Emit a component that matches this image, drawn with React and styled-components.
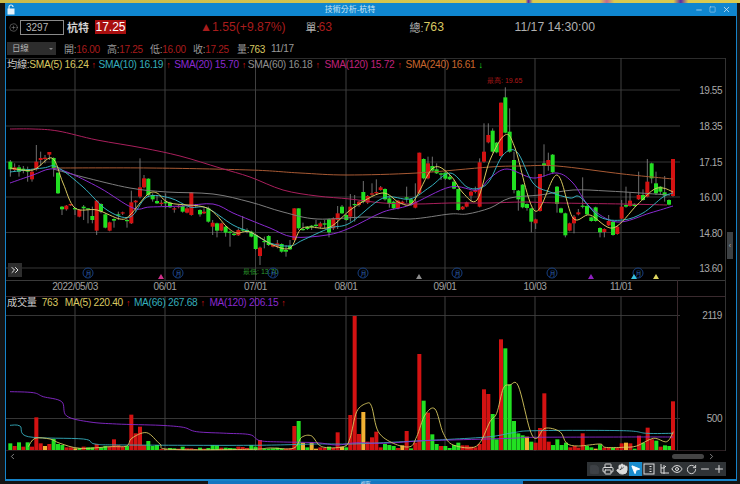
import React from "react";
import styled, { createGlobalStyle } from "styled-components";
import { CirclePlus, Printer, Hand, MousePointer2, Eye, RotateCw, Minus, Plus, Save, ChevronsRight, ChevronLeft, ChevronRight, X, Square } from "lucide-react";

const Global = createGlobalStyle`
  html, body { margin: 0; padding: 0; background: #141414; }
  body { font-family: "Liberation Sans", "Noto Sans CJK TC", sans-serif; }
`;

const C = {
  red: "#d41212", green: "#22e022", orange: "#f2b233", yellow: "#d8c860", cyan: "#35aebd",
  purple: "#8a2ad0", gray: "#8f8f8f", pink: "#c0227a", amber: "#c8662c", dim: "#b0b0b0", darkred: "#a81c1c",
};

const Page = styled.div`
  width: 740px; height: 484px; overflow: hidden; display: flex; flex-direction: column; background: #141414;
`;
const DesktopStrip = styled.div`
  height: 3px; flex: none; background: linear-gradient(90deg, #c9b94a 0, #d9c94e 71%, #5a2aa8 71.4%, #d9c94e 72%, #d9c94e 81%, #c06a90 82%, #d9c94e 83%, #d9c94e 91%, #5a2aa8 92%, #d9c94e 93%);
`;
const Win = styled.div`
  flex: none; height: 476px; margin: 0 3px 0 5px; background: #000; border: solid #1683c8; border-width: 0 1px 2px 1px;
  display: flex; flex-direction: column; overflow: hidden;
`;
const TitleBar = styled.div`
  height: 13px; flex: none; background: #0f86cf; display: flex; align-items: center; padding: 0 2px 0 1px; position: relative;
`;
const TitleText = styled.div`
  flex: 1; text-align: center; color: #cfe6f5; font-size: 8px; line-height: 13px; padding-right: 10px;
`;
const WinBtns = styled.div`display: flex; gap: 6px; align-items: center; color: #dcecf7; padding-right: 3px;`;
const HeadRow = styled.div`
  height: 22px; flex: none; display: flex; align-items: center; padding-left: 3px; color: ${C.dim}; font-size: 12px; white-space: nowrap;
`;
const CodeBox = styled.div`
  width: 44px; height: 15px; margin-left: 2px; border: 1px solid #8a8a8a; color: #b8b8b8; font-size: 10px; line-height: 13px; padding-left: 5px; box-sizing: border-box;
`;
const StockName = styled.span`margin-left: 3px; color: #d0d0d0; font-size: 11px; font-weight: bold; width: 28px; flex: none;`;
const PriceBox = styled.span`
  background: #a80f0f; color: #fff; font-size: 12px; height: 14px; line-height: 14px; width: 31px; flex: none; text-align: center;
`;
const Big = styled.span`
  color: ${p => p.$c || C.dim}; font-size: ${p => p.$s || 12.2}px; margin-left: ${p => p.$ml || 0}px; width: ${p => p.$w ? p.$w + "px" : "auto"}; flex: none;
`;
const SubRow = styled.div`
  height: 20px; flex: none; display: flex; align-items: center; padding-left: 1px; font-size: 10px; letter-spacing: -0.3px; color: #9a9a9a; white-space: nowrap; padding-top: 1px; box-sizing: border-box;
`;
const PeriodSelect = styled.div`
  width: 49px; height: 13px; background: #2d2d2d; color: #b5b5b5; font-size: 8.5px; line-height: 13px; padding-left: 5px; box-sizing: border-box; margin-right: 8px; position: relative;
  &::after { content: ""; position: absolute; right: 3px; top: 6px; border: 2px solid transparent; border-top-color: #888; }
`;
const Quote = styled.span`width: ${p => p.$w}px; flex: none;`;
const QV = styled.span`color: ${p => p.$c};`;
const Pane = styled.div`position: relative; flex: none; height: ${p => p.$h}px; display: block;`;
const PaneSvg = styled.svg`display: block; width: 731px; height: ${p => p.$h}px; font-family: "Liberation Sans", sans-serif;`;
const Legend = styled.div`
  position: absolute; left: 1px; top: 0; display: flex; align-items: center; font-size: 10.2px; letter-spacing: -0.3px; line-height: 14px; white-space: nowrap; color: #c8c8c8;
`;
const LegendItem = styled.span`color: ${p => p.$c}; margin-left: ${p => p.$ml || 0}px;`;
const Arrow = styled.span`color: ${p => p.$c}; margin-left: 3px; font-size: 9px; font-weight: bold; display: inline-block; width: 4px; text-align: center;`;
const ExpandBtn = styled.div`
  position: absolute; left: 2px; top: 205px; width: 14px; height: 14px; background: #2e2e2e; color: #e8e8e8; display: flex; align-items: center; justify-content: center;
`;
const Bottom = styled.div`flex: 1; display: flex; flex-direction: column;`;
const ScrollRow = styled.div`height: 11px; flex: none; display: flex; align-items: center; color: #aaa; padding: 0 20px 0 2px;`;
const Thumb = styled.div`width: 32px; height: 5px; background: #444; border-radius: 3px; margin-left: auto; margin-right: 3px;`;
const ToolRow = styled.div`display: flex; justify-content: flex-end; padding-right: 10px;`;
const Tool = styled.div`
  width: ${p => p.$w || 14}px; height: 14px; flex: none; display: flex; align-items: center; justify-content: center; background: ${p => p.$on ? "#1a8ccc" : "#2f3336"}; color: ${p => p.$dim ? "#3e4246" : "#dcdcdc"};
`;
const SideHandle = styled.div`
  position: absolute; right: 3px; top: 174px; width: 6px; height: 27px; background: #3d4144; color: #aaa; font-size: 7px; line-height: 27px; text-align: center;
`;
const Taskbar = styled.div`flex: 1; display: flex; padding-left: 208px;`;
const TaskButton = styled.div`
  width: 315px; height: 5px; overflow: hidden; background: #1576c0; color: #dcecf7; font-size: 5px; line-height: 5px; text-align: center;
`;

const G = "g", R = "r", O = "o";
const colorOf = { g: "#22e022", r: "#d41212", o: "#f2b233" };
const cand = [
 [0,[[G,31,245,268,240,290],[R,44,262,270,250,275],[G,57,262,275,255,290],[G,70,266,272,258,280],[G,83,268,275,260,305],[R,96,275,298,270,305],[R,109,245,268,195,272],[R,122,234,240,215,258],[R,135,233,237,225,250],[R,148,216,224,216,240],[G,161,234,265,232,290],[G,174,278,340,278,342],[G,186,380,388,378,405],[R,199,377,388,375,392],[R,212,372,376,372,378],[G,225,384,388,384,405],[R,238,390,410,388,412],[G,251,380,385,375,420],[G,264,385,388,385,430],[G,277,408,420,380,430],[R,290,362,452,360,465],[G,303,372,395,370,400],[G,316,403,443,400,445],[R,329,427,452,425,454],[G,342,417,422,415,443],[G,355,403,405,395,420],[R,368,397,400,395,405],[G,381,420,423,415,443],[R,394,367,430,332,432],[R,407,362,367,360,395],[R,420,322,350,235,355],[R,432,295,322,285,325],[G,445,296,345,295,348],[G,458,345,358,340,365],[G,471,363,370,345,372],[R,484,368,372,360,378],[G,497,365,370,340,385],[G,510,368,382,365,384],[R,523,385,388,380,398],[R,536,378,381,375,385],[G,548,378,395,375,398],[R,561,385,398,380,400],[R,574,337,405,337,407],[R,587,375,378,372,382],[G,600,390,403,388,410],[R,612,395,400,385,402],[G,625,385,425,380,428],[R,638,428,440,420,465],[G,651,430,452,428,472],[R,664,430,452,428,454],[G,677,440,458,436,470],[G,690,455,458,452,500],[G,702,461,465,458,468],[R,715,450,466,445,468],[G,728,448,452,408,455],[G,741,450,456,445,460]]],
 [250,[[G,4,455,470,452,472],[G,17,465,507,462,510],[R,30,503,528,500,555],[G,43,483,486,470,505],[G,56,468,495,465,498],[R,69,495,500,492,502],[R,82,490,500,480,505],[G,95,492,515,490,518],[G,108,510,515,495,530],[G,120,497,508,480,510],[R,133,385,480,385,482],[G,146,385,445,385,450],[G,159,447,450,428,452],[G,172,440,447,438,450],[G,185,437,442,435,450],[G,198,434,438,420,445],[R,211,430,440,425,445],[G,224,430,434,420,445],[G,237,418,457,415,472],[R,250,415,445,412,450],[R,263,400,420,378,447],[G,276,380,400,375,402],[G,289,405,420,403,422],[R,301,380,410,342,425],[G,314,372,375,345,425],[R,327,365,375,362,380],[G,340,336,366,303,370],[R,353,348,368,345,372],[R,366,340,344,310,348],[R,379,336,340,298,342],[R,392,322,330,318,332],[G,405,327,358,325,362],[G,418,355,372,350,383],[G,431,365,385,362,388],[R,444,362,385,360,388],[R,457,365,370,362,372],[G,470,352,356,320,368],[G,483,358,375,356,378],[R,496,365,383,310,385],[R,508,218,340,218,342],[G,521,237,295,235,298],[R,534,250,295,230,298],[G,547,258,272,230,275],[G,560,268,280,250,282],[G,573,280,284,278,300],[G,586,278,296,275,300],[G,599,290,298,285,300],[G,612,305,326,300,328],[G,625,327,390,325,392],[R,638,380,388,378,390],[R,650,367,380,365,382],[R,663,335,347,332,365],[R,676,330,336,320,340],[R,689,247,380,235,382],[R,702,215,245,130,248],[R,715,165,187,130,190]]],
 [490,[[G,8,152,215,145,218],[G,20,188,217,186,220],[R,33,68,228,68,230],[G,46,52,158,22,160],[G,59,155,215,85,218],[G,72,240,330,215,340],[G,85,332,358,330,392],[G,98,314,382,312,385],[G,111,372,384,370,392],[G,124,385,425,383,457],[R,137,418,430,416,447],[R,150,282,393,282,395],[G,162,250,258,193,290],[R,175,240,258,218,272],[G,188,224,277,222,280],[G,201,320,372,318,398],[G,213,385,398,383,400],[G,226,400,466,398,472],[R,239,430,452,428,454],[R,252,410,430,405,460],[R,265,397,403,387,406],[G,278,377,380,292,385],[G,291,378,403,376,405],[G,304,412,423,410,425],[G,317,382,423,380,425],[G,330,444,457,442,472],[R,343,447,456,445,472],[R,356,423,436,405,438],[G,369,425,465,423,467],[R,382,440,462,438,464],[R,395,380,416,360,418],[G,408,375,380,320,383],[R,420,362,378,338,380],[G,433,373,378,370,380],[R,446,345,358,275,360],[G,459,345,360,328,362],[R,472,305,350,237,352],[G,485,250,295,248,310],[G,498,310,340,275,345],[G,511,320,335,318,345],[G,524,337,347,288,365],[G,537,360,374,358,376],[R,549,237,348,237,350]]],
];
const vol = [
 [0,[[G,31,460],[R,44,468],[G,57,457],[R,70,470],[G,83,457],[R,96,470],[R,109,382],[R,122,460],[O,135,468],[R,148,462],[G,161,447],[G,174,462],[G,187,465],[R,200,472],[R,213,472],[O,226,475],[G,239,474],[R,251,470],[G,264,472],[G,277,472],[R,290,462],[G,303,472],[G,316,468],[R,329,470],[R,342,448],[R,355,465],[R,368,470],[G,381,468],[R,394,374],[R,407,430],[R,420,410],[R,432,465],[G,445,453],[G,458,468],[G,471,465],[R,484,477],[O,497,478],[G,510,474],[G,523,475],[R,536,476],[G,548,470],[R,561,475],[R,574,475],[R,587,477],[G,600,473],[R,612,476],[G,625,474],[G,638,465],[G,651,466],[R,664,473],[G,677,473],[G,690,474],[G,702,475],[R,715,470],[R,728,471],[R,741,474]]],
 [250,[[G,4,465],[G,17,470],[R,30,450],[G,43,476],[G,56,476],[G,69,475],[G,82,473],[G,95,475],[R,108,476],[R,121,475],[R,133,408],[G,146,393],[O,159,458],[G,172,472],[O,185,458],[O,198,476],[R,211,472],[R,224,474],[G,237,470],[R,250,474],[R,263,427],[O,276,470],[G,289,472],[R,301,375],[R,314,78],[R,327,432],[O,340,366],[R,353,455],[R,366,442],[R,379,425],[R,392,472],[G,405,462],[G,418,465],[G,431,468],[R,444,474],[O,457,466],[R,470,423],[G,483,475],[R,496,458],[R,508,192],[G,521,332],[R,534,368],[G,547,433],[G,560,462],[R,573,468],[G,586,468],[G,599,474],[G,612,465],[G,625,458],[R,638,466],[R,651,466],[R,663,470],[R,676,472],[R,689,462],[R,702,298],[R,715,312]]],
 [490,[[G,8,372],[G,20,448],[R,33,148],[G,46,175],[G,59,283],[G,72,393],[G,85,430],[G,98,436],[O,111,440],[G,124,455],[R,137,458],[R,150,414],[R,163,310],[R,176,455],[G,189,465],[G,202,448],[G,215,465],[G,228,458],[R,241,472],[R,254,468],[R,265,473],[R,278,430],[G,291,468],[G,304,472],[O,317,476],[G,330,463],[R,343,473],[R,356,473],[G,369,473],[R,382,473],[R,395,460],[O,408,458],[R,421,460],[G,434,476],[R,447,437],[G,460,458],[R,473,413],[R,486,448],[G,499,452],[R,512,470],[G,525,466],[G,538,468],[R,549,334]]],
];
const lines = [
 { c: "#a85a34", p: [[53,168],[150,168],[250,170],[300,173],[347,175],[417,173],[490,167],[523,166],[557,166],[623,174],[673,179]] },
 { c: "#a91f5c", p: [[10,129],[33,129],[58,131],[97,140],[143,148],[180,156],[220,168],[250,177],[283,190],[317,196],[350,199],[383,203],[417,204],[450,203],[490,203],[523,202],[557,203],[623,204],[667,205]] },
 { c: "#7d7d7d", p: [[53,169],[83,177],[130,188],[167,192],[213,194],[250,202],[283,212],[317,219],[367,217],[410,219],[450,214],[467,214],[490,208],[510,198],[540,195],[573,190],[607,191],[640,193],[670,195]] },
 { c: "#8a2ad0", p: [[10,183],[33,175],[50,169],[67,172],[100,188],[133,208],[150,207],[183,206],[213,204],[233,213],[250,220],[270,228],[293,237],[327,235],[350,228],[383,212],[410,205],[450,187],[477,190],[490,178],[507,169],[533,178],[557,173],[573,183],[590,207],[617,222],[650,213],[673,206]] },
 { c: "#35aebd", p: [[10,172],[43,168],[57,167],[83,187],[107,210],[130,217],[147,197],[170,198],[190,207],[207,208],[233,225],[250,232],[270,243],[290,246],[303,240],[330,228],[350,223],[383,198],[410,199],[430,187],[450,173],[467,187],[480,188],[490,180],[503,155],[517,152],[533,183],[550,192],[570,198],[580,197],[600,217],[623,220],[643,213],[663,197],[673,193]] },
 { c: "#d8c860", p: [[10,168],[33,170],[52,158],[63,183],[75,208],[97,210],[120,219],[130,215],[147,195],[157,193],[170,203],[207,208],[227,227],[237,233],[250,232],[273,245],[290,248],[300,230],[310,227],[330,227],[353,208],[382,193],[400,203],[413,202],[433,168],[450,175],[463,193],[477,200],[490,160],[505,135],[515,148],[535,211],[557,175],[573,218],[590,215],[613,228],[637,205],[653,190],[663,188],[673,192]] },
];
const vp = (x0, pts) => pts.map(([x, y]) => [x0 + x / 3, 290 + y / 3]);
const volLines = [
 { c: "#35aebd", p: [...vp(0,[[30,406],[60,408],[85,440],[250,447],[285,462],[380,465],[750,466]]), ...vp(250,[[200,462],[300,462],[400,458],[520,452],[600,448]]), ...vp(490,[[0,440],[70,428],[135,422],[400,422],[470,430],[550,430]])] },
 { c: "#8a2ad0", p: [...vp(0,[[30,305],[100,308],[130,320],[185,335],[200,378],[270,396],[350,402],[480,406],[550,412],[590,425],[680,430],[750,434]]), ...vp(250,[[30,452],[100,456],[200,458],[260,465],[320,458],[400,460],[520,452],[600,450]]), ...vp(490,[[60,445],[130,442],[400,441],[550,441]])] },
 { c: "#d8c860", p: [...vp(0,[[85,470],[105,445],[150,447],[180,460],[240,475],[330,470],[380,468],[395,445],[440,428],[480,462],[510,478],[750,478]]), ...vp(250,[[60,474],[130,475],[155,442],[185,438],[215,470],[280,470],[300,445],[320,365],[350,340],[365,350],[385,425],[430,460],[480,470],[500,440],[525,375],[555,357],[580,430],[610,465],[680,468],[720,395]]), ...vp(490,[[20,370],[40,295],[60,285],[85,288],[120,420],[140,445],[165,415],[210,425],[230,460],[265,468],[330,462],[345,472],[400,472],[440,468],[490,445],[530,455],[550,425]])] },
];
const smooth = (p) => {
  let d = `M${p[0][0]} ${p[0][1]}`;
  for (let i = 0; i < p.length - 1; i++) {
    const a = p[i - 1] || p[i], b = p[i], c = p[i + 1], e = p[i + 2] || c;
    d += `C${(b[0] + (c[0] - a[0]) / 6).toFixed(1)} ${(b[1] + (c[1] - a[1]) / 6).toFixed(1)} ${(c[0] - (e[0] - b[0]) / 6).toFixed(1)} ${(c[1] - (e[1] - b[1]) / 6).toFixed(1)} ${c[0].toFixed(1)} ${c[1].toFixed(1)}`;
  }
  return d;
};
const V = [75, 165, 255.5, 346, 445, 535, 621];
const DATES = [[75, "2022/05/03"], [165, "06/01"], [255.5, "07/01"], [346, "08/01"], [445, "09/01"], [535, "10/03"], [621, "11/01"]];
const H = [[90, "19.55"], [126, "18.35"], [162, "17.15"], [197, "16.00"], [232.5, "14.80"], [268, "13.60"]];
const MOONS = [88, 178, 273, 363, 457, 552, 638];
const TRI = [[161, "#d0308a"], [419, "#8c8c8c"], [591, "#9020c0"], [634, "#35c0e0"], [656, "#e0d860"]];

const AxisText = styled.text`font-size: 10px; letter-spacing: -0.45px; fill: ${p => p.$c};`;

const PriceChart = () => (
  <PaneSvg $h={238} viewBox="6 58 731 238">
    {H.map(([y]) => <line key={y} x1="6" x2="680" y1={y} y2={y} stroke="#363636" strokeWidth="1" />)}
    <line x1="6" x2="725" y1="58.5" y2="58.5" stroke="#2c2c2c" />
    <line x1="6" x2="725" y1="280.5" y2="280.5" stroke="#3a3a3a" />
    <line x1="725.5" x2="725.5" y1="58" y2="296" stroke="#333" />
    <line x1="677.5" x2="677.5" y1="280" y2="296" stroke="#3a2a2e" />
    {V.map(x => <line key={x} x1={x} x2={x} y1="58" y2="281" stroke="#404040" />)}
    {cand.map(([x0, list]) => list.map(([k, zx, t, b, wt, wb]) => {
      const x = x0 + zx / 3;
      return (
        <g key={x0 + "-" + zx}>
          <line x1={x} x2={x} y1={80 + wt / 3} y2={80 + wb / 3} stroke="#8c8c8c" strokeWidth="0.8" />
          <rect x={x - 2} y={80 + t / 3} width="4" height={Math.max(1.2, (b - t) / 3)} fill={colorOf[k]} />
        </g>
      );
    }))}
    {lines.map(l => <path key={l.c} d={smooth(l.p)} fill="none" stroke={l.c} strokeWidth="1" />)}
    <text x="487" y="83" fontSize="7" fill="#b01818">最高: 19.65</text>
    <text x="243" y="274" fontSize="7" fill="#2c9c2c">最低: 13.70</text>
    {MOONS.map(x => (
      <g key={x}>
        <circle cx={x} cy="273" r="5" fill="none" stroke="#173f80" />
        <text x={x} y="276" fontSize="7" textAnchor="middle" fill="#2f66b8">月</text>
      </g>
    ))}
    {TRI.map(([x, c]) => <polygon key={x} points={`${x - 3},279 ${x + 3},279 ${x},274`} fill={c} />)}
    {H.map(([y, t]) => <AxisText key={t} $c="#a8a8a8" x="722" y={y + 4} textAnchor="end">{t}</AxisText>)}
    {DATES.map(([x, t]) => <AxisText key={t} $c="#a0a0a0" x={x} y="290" textAnchor="middle">{t}</AxisText>)}
  </PaneSvg>
);
const VolumeChart = () => (
  <PaneSvg $h={155} viewBox="6 296 731 155">
    <line x1="6" x2="725" y1="296.5" y2="296.5" stroke="#3a2a2e" />
    <line x1="6" x2="680" y1="315.5" y2="315.5" stroke="#363636" />
    <line x1="6" x2="680" y1="418.5" y2="418.5" stroke="#363636" />
    <line x1="6" x2="725" y1="451" y2="451" stroke="#3a2a2e" strokeWidth="1.5" />
    <line x1="677.5" x2="677.5" y1="296" y2="451" stroke="#3a2a2e" />
    <line x1="725.5" x2="725.5" y1="296" y2="451" stroke="#333" />
    {V.map(x => <line key={x} x1={x} x2={x} y1="296" y2="451" stroke="#404040" />)}
    {vol.map(([x0, list]) => list.map(([k, zx, t]) => {
      const y = 290 + t / 3;
      return <rect key={x0 + "-" + zx} x={x0 + zx / 3 - 2} y={y} width="4" height={450 - y} fill={colorOf[k]} />;
    }))}
    {volLines.map(l => <path key={l.c} d={smooth(l.p)} fill="none" stroke={l.c} strokeWidth="0.9" />)}
    <AxisText $c="#a8a8a8" x="722" y="319" textAnchor="end">2119</AxisText>
    <AxisText $c="#a8a8a8" x="722" y="422" textAnchor="end">500</AxisText>
  </PaneSvg>
);

const LockIcon = () => (
  <svg width="8" height="11" viewBox="0 0 8 11"><path d="M2 5V3a2 2 0 0 1 4 0" fill="none" stroke="#e4f1fa" strokeWidth="1.2" /><rect x="0.5" y="4.5" width="7" height="6" fill="#e4f1fa" /></svg>
);
const PanelIcon = () => (
  <svg width="12" height="12" viewBox="0 0 12 12" fill="none" stroke="#dcdcdc"><rect x="1" y="1" width="10" height="10" /><path d="M6.5 3.5h2M6.5 6h2M6.5 8.5h2" /></svg>
);
const PenIcon = () => (
  <svg width="13" height="13" viewBox="0 0 13 13" fill="none" stroke="#dcdcdc"><path d="M4 1v9H12M4 5h3M7 2v6M9 3L7 5M7 8v3" /></svg>
);

export default function App() {
  return (
    <Page>
      <Global />
      <DesktopStrip />
      <Win>
        <TitleBar>
          <LockIcon />
          <TitleText>技術分析-杭特</TitleText>
          <WinBtns>
            <Minus size={8} strokeWidth={2} />
            <Square size={7} strokeWidth={1.5} />
            <X size={9} strokeWidth={2} />
          </WinBtns>
        </TitleBar>
        <HeadRow>
          <CirclePlus size={9} strokeWidth={1.3} color="#9a9a9a" />
          <CodeBox>3297</CodeBox>
          <StockName>杭特</StockName>
          <PriceBox>17.25</PriceBox>
          <Big $c={C.darkred} $ml={74}>▲1.55(+9.87%)</Big>
          <Big $ml={20} $s={11} $w={13}>單:</Big><Big $c={C.darkred} $w={91}>63</Big>
          <Big $s={11} $w={14}>總:</Big><Big $c={C.yellow} $w={91}>763</Big>
          <Big>11/17 14:30:00</Big>
        </HeadRow>
        <SubRow>
          <PeriodSelect>日線</PeriodSelect>
          <Quote $w={43}>開:<QV $c={C.darkred}>16.00</QV></Quote>
          <Quote $w={43}>高:<QV $c={C.darkred}>17.25</QV></Quote>
          <Quote $w={43}>低:<QV $c={C.darkred}>16.00</QV></Quote>
          <Quote $w={44}>收:<QV $c={C.darkred}>17.25</QV></Quote>
          <Quote $w={34}>量:<QV $c={C.yellow}>763</QV></Quote>
          <Quote $w={30}>11/17</Quote>
        </SubRow>
        <Pane $h={238}>
          <PriceChart />
          <Legend>
            <LegendItem $c="#c8c8c8">均線:</LegendItem>
            <LegendItem $c={C.yellow}>SMA(5) 16.24</LegendItem><Arrow $c={C.red}>↑</Arrow>
            <LegendItem $c={C.cyan} $ml={3}>SMA(10) 16.19</LegendItem><Arrow $c={C.red}>↑</Arrow>
            <LegendItem $c={C.purple} $ml={4}>SMA(20) 15.70</LegendItem><Arrow $c={C.red}>↑</Arrow>
            <LegendItem $c={C.gray} $ml={2}>SMA(60) 16.18</LegendItem><Arrow $c={C.red}>↑</Arrow>
            <LegendItem $c={C.pink} $ml={5}>SMA(120) 15.72</LegendItem><Arrow $c={C.red}>↑</Arrow>
            <LegendItem $c={C.amber} $ml={4}>SMA(240) 16.61</LegendItem><Arrow $c={C.green}>↓</Arrow>
          </Legend>
          <ExpandBtn><ChevronsRight size={12} strokeWidth={2} /></ExpandBtn>
          <SideHandle>‹</SideHandle>
        </Pane>
        <Pane $h={155}>
          <VolumeChart />
          <Legend>
            <LegendItem $c="#c8c8c8">成交量</LegendItem>
            <LegendItem $c={C.yellow} $ml={5}>763</LegendItem>
            <LegendItem $c={C.yellow} $ml={7}>MA(5) 220.40</LegendItem><Arrow $c={C.red}>↑</Arrow>
            <LegendItem $c={C.cyan} $ml={4}>MA(66) 267.68</LegendItem><Arrow $c={C.red}>↑</Arrow>
            <LegendItem $c={C.purple} $ml={5}>MA(120) 206.15</LegendItem><Arrow $c={C.red}>↑</Arrow>
          </Legend>
        </Pane>
        <Bottom>
          <ScrollRow>
            <ChevronLeft size={9} />
            <Thumb />
            <ChevronRight size={9} />
          </ScrollRow>
          <ToolRow>
            <Tool $dim><Save size={11} fill="#3e4246" /></Tool>
            <Tool><Printer size={12} /></Tool>
            <Tool><Hand size={12} fill="#dcdcdc" /></Tool>
            <Tool $on $w={13}><MousePointer2 size={11} fill="#fff" color="#fff" /></Tool>
            <Tool><PanelIcon /></Tool>
            <Tool><PenIcon /></Tool>
            <Tool><Eye size={12} /></Tool>
            <Tool><RotateCw size={11} /></Tool>
            <Tool><Minus size={12} /></Tool>
            <Tool><Plus size={12} /></Tool>
          </ToolRow>
        </Bottom>
      </Win>
      <Taskbar><TaskButton>視窗</TaskButton></Taskbar>
    </Page>
  );
}
